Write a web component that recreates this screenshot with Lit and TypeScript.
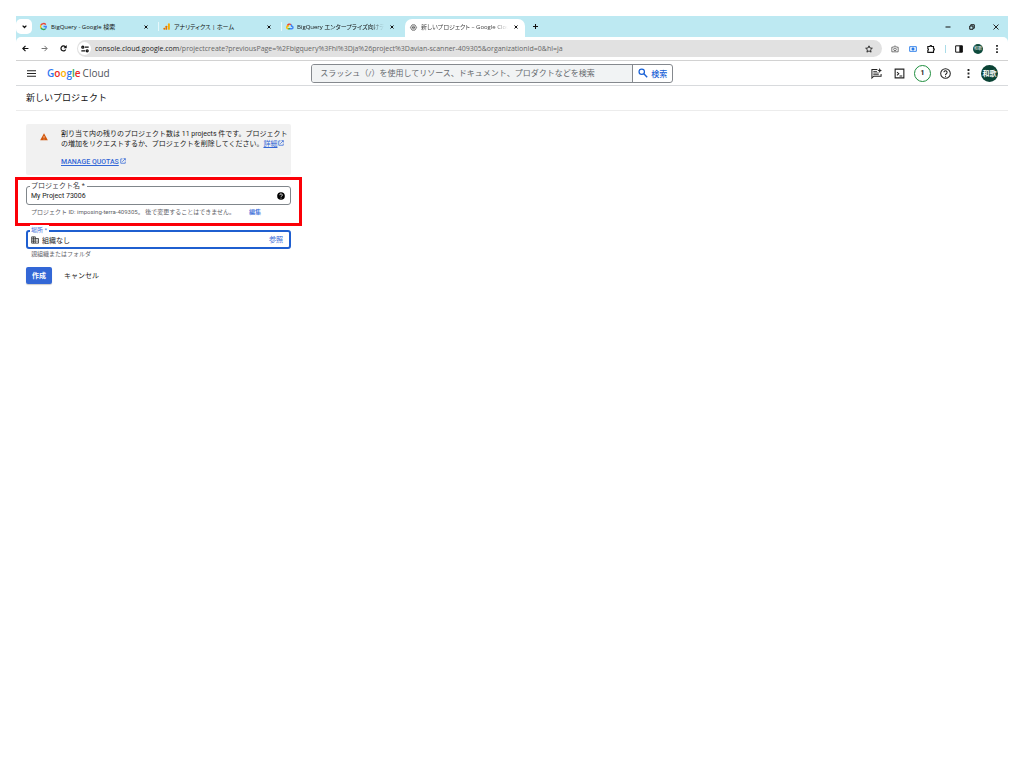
import { LitElement, html, css, svg } from "lit";
import { customElement, property } from "lit/decorators.js";

const gBlue = "#4285f4", gRed = "#ea4335", gYellow = "#fbbc04", gGreen = "#34a853";

const icons: Record<string, unknown> = {
  down: svg`<path d="M3 8l9 9 9-9" fill="none" stroke="currentColor" stroke-width="6"/>`,
  close: svg`<path d="M3 3l18 18M21 3L3 21" fill="none" stroke="currentColor" stroke-width="6"/>`,
  thinClose: svg`<path d="M2 2l20 20M22 2L2 22" fill="none" stroke="currentColor" stroke-width="3.600"/>`,
  plus: svg`<path d="M12 0v24M0 12h24" fill="none" stroke="currentColor" stroke-width="5"/>`,
  minimize: svg`<path d="M2 12h20" fill="none" stroke="currentColor" stroke-width="4"/>`,
  restore: svg`<path d="M3 8h13v13H3zM7 7V3h14v14h-4" fill="none" stroke="currentColor" stroke-width="4"/>`,
  back: svg`<path d="M22 12H4M12 3l-9 9 9 9" fill="none" stroke="currentColor" stroke-width="4"/>`,
  forward: svg`<path d="M2 12h18M12 3l9 9-9 9" fill="none" stroke="currentColor" stroke-width="2.800"/>`,
  reload: svg`<path d="M19.500 15.500A8.500 8.500 0 1 1 18 6l2 2.500" fill="none" stroke="currentColor" stroke-width="4.200"/><path d="M23 0v11H12z" fill="currentColor"/>`,
  tune: svg`<path d="M12 6.500h11M1 17.500h11" stroke="currentColor" stroke-width="4"/><circle cx="5.500" cy="6.500" r="3" fill="none" stroke="currentColor" stroke-width="4"/><circle cx="18.500" cy="17.500" r="3" fill="none" stroke="currentColor" stroke-width="4"/>`,
  star: svg`<path d="M12 2.500l2.900 6.500 7.100.7-5.300 4.700 1.500 7L12 17.700 5.800 21.400l1.500-7L2 9.700 9.100 9z" fill="none" stroke="currentColor" stroke-width="2.500"/>`,
  camera: svg`<path d="M2.500 6.500h5l2-3h5l2 3h5v14h-19z" fill="none" stroke="currentColor" stroke-width="2.400"/><circle cx="12" cy="13" r="4" fill="none" stroke="currentColor" stroke-width="2.400"/>`,
  capture: svg`<path d="M2 5h20v14H2z" fill="none" stroke="currentColor" stroke-width="2.600"/><path d="M12 7.500v9M7.500 12h9" stroke="currentColor" stroke-width="4.500"/>`,
  puzzle: svg`<path d="M2.500 4.500H9a2.500 2.500 0 0 1 5 0h5.500V11a2.500 2.500 0 0 1 0 5v6h-17v-6a2.600 2.600 0 0 0 0-5z" fill="none" stroke="currentColor" stroke-width="3.400"/>`,
  panel: svg`<path d="M2 2.500h20v19H2z" fill="none" stroke="currentColor" stroke-width="3"/><path d="M13 2h9v20h-9z" fill="currentColor"/>`,
  dots: svg`<path d="M9.500 0h5v5h-5zM9.500 9.500h5v5h-5zM9.500 19h5v5h-5z" fill="currentColor"/>`,
  menu: svg`<path d="M0 4.500h24M0 12h24M0 19.500h24" stroke="currentColor" stroke-width="2.800"/>`,
  search: svg`<circle cx="9" cy="9" r="6.500" fill="none" stroke="currentColor" stroke-width="3"/><path d="M14 14l8 8" stroke="currentColor" stroke-width="3.400"/>`,
  chat: svg`<path d="M14 3.500H2V22l4-4h16v-5" fill="none" stroke="currentColor" stroke-width="2.200"/><path d="M5 7.500h8M5 11h12M5 14.500h12" stroke="currentColor" stroke-width="1.800"/><path d="M19 0l1.500 4 3.500 1.500L20.500 7 19 11l-1.500-4L14 5.500 17.500 4z" fill="currentColor"/>`,
  shell: svg`<path d="M2.500 2.500h19v19h-19z" fill="none" stroke="currentColor" stroke-width="2.400"/><path d="M6.500 9l4 3.500-4 3.500M12 17.500h6" fill="none" stroke="currentColor" stroke-width="2.200"/>`,
  help: svg`<circle cx="12" cy="12" r="10.500" fill="none" stroke="currentColor" stroke-width="2.200"/><path d="M8.500 9.500a3.500 3.500 0 1 1 5.300 3c-1.300.8-1.800 1.400-1.800 2.700" fill="none" stroke="currentColor" stroke-width="2.200"/><path d="M10.900 17h2.300v2.300h-2.300z" fill="currentColor"/>`,
  helpFilled: svg`<circle cx="12" cy="12" r="11.500" fill="#000"/><path d="M8.300 9.500a3.700 3.700 0 1 1 5.500 3c-1.300.8-1.800 1.400-1.800 2.700" fill="none" stroke="#fff" stroke-width="2.600"/><path d="M10.700 17h2.600v2.600h-2.600z" fill="#fff"/>`,
  warning: svg`<path d="M12 1l11.500 21H.5z" fill="#d2570c"/><path d="M12 9v6M12 17v2.500" stroke="#ffe6d5" stroke-width="2"/>`,
  external: svg`<path d="M10 3.500H3v17.500h18v-7" fill="none" stroke="currentColor" stroke-width="3"/><path d="M14 2.500h7.500V10M21 3L9 15" fill="none" stroke="currentColor" stroke-width="3"/>`,
  building: svg`<path d="M2 2.500h11v19H2zM13 7.500h9.500v14H13" fill="none" stroke="currentColor" stroke-width="2.200"/><path d="M2 7h11M2 12h11M2 17h11M7.500 2.500v19M16 12h4M16 17h4" stroke="currentColor" stroke-width="2"/>`,
  google: svg`<path d="M20 5.500A10.300 10.300 0 0 0 3 7.300" fill="none" stroke=${gRed} stroke-width="4.500"/><path d="M3.400 6.800a10 10 0 0 0 0 10.400" fill="none" stroke=${gYellow} stroke-width="4.500"/><path d="M3.200 16.800a10 10 0 0 0 15.500 3" fill="none" stroke=${gGreen} stroke-width="4.500"/><path d="M12 12h9.500c0 3-1 6-3 8" fill="none" stroke=${gBlue} stroke-width="4.500"/>`,
  analytics: svg`<circle cx="4.500" cy="20" r="3.500" fill="#e37400"/><rect x="8.500" y="9" width="6" height="14.500" rx="2.500" fill="#e37400"/><rect x="17" y="1" width="6.500" height="22.500" rx="3" fill="#f9ab00"/>`,
  cloud: svg`<path d="M5 10a7.500 7.500 0 0 1 12-4.500" fill="none" stroke=${gRed} stroke-width="5"/><path d="M16.500 5.500A7 7 0 0 1 19.500 11a4.500 4.500 0 0 1 0 9H13" fill="none" stroke=${gBlue} stroke-width="5"/><path d="M13.500 20H7" stroke=${gGreen} stroke-width="5"/><path d="M8 20a5 5 0 1 1 2.500-9" fill="none" stroke=${gYellow} stroke-width="5"/>`,
  hexagon: svg`<path d="M7 3h10l5.500 9L17 21H7L1.500 12z" fill="none" stroke="currentColor" stroke-width="2.500"/><circle cx="12" cy="12" r="4" fill="none" stroke="currentColor" stroke-width="2.500"/><path d="M6 12h12" stroke="currentColor" stroke-width="2"/>`,
};

@customElement("ui-icon")
export class UiIcon extends LitElement {
  @property() name = "";
  static styles = css`
    :host { display: inline-block; flex: none; width: 8px; height: 8px; }
    .glyph { display: block; width: 100%; height: 100%; overflow: visible; }
  `;
  render() {
    return html`<svg class="glyph" viewBox="0 0 24 24" aria-hidden="true">${icons[this.name]}</svg>`;
  }
}

const shared = css`
  :host, * { box-sizing: border-box; }
  button, input { font: inherit; color: inherit; background: none; border: 0; padding: 0; margin: 0; outline: 0; min-width: 0; }
  button { display: flex; align-items: center; justify-content: center; cursor: pointer; white-space: nowrap; flex: none; }
`;

@customElement("browser-chrome")
export class BrowserChrome extends LitElement {
  static styles = [shared, css`
    :host { display: block; background: #bde9f2; color: #111; font-family: "Open Sans", "Noto Sans CJK JP", sans-serif; font-size: 6px; line-height: 10px; }
    .strip { display: flex; align-items: center; height: 21px; }
    .list { width: 16px; height: 15px; border-radius: 5px; background: #fff; margin-right: 4px; }
    .list ui-icon { width: 5px; height: 5px; }
    .tab { display: flex; align-items: center; flex: 0 1 123px; min-width: 0; height: 21px; padding: 0 9px 0 4px; gap: 4px; }
    .tab ui-icon { width: 7px; height: 7px; }
    .name { flex: 1; min-width: 0; overflow: hidden; white-space: nowrap; font-feature-settings: "palt"; }
    .fade { mask-image: linear-gradient(to right, #000 85%, transparent); }
    .tab button { width: 8px; height: 8px; }
    .tab button ui-icon { width: 4px; height: 4px; }
    .new ui-icon { width: 5px; height: 5px; }
    .split::before { content: ""; width: 1px; height: 9px; margin: 0 0 0 -5px; background: #e6f8fb; }
    .active { flex-basis: 120px; background: #fff; border-radius: 7px 7px 0 0; height: 18px; align-self: flex-end; padding: 0 5px 2px 5px; color: #444; }
    .active button { color: #111; }
    .new { width: 20px; height: 16px; }
    .window { margin-left: auto; display: flex; gap: 18px; padding-right: 9px; }
    .window ui-icon { width: 6px; height: 6px; display: block; }
    .bar { display: flex; align-items: center; height: 24px; background: #fff; border-radius: 5px 5px 0 0; border-bottom: 1px solid #d2d2d2; padding: 0 7px 0 5px; }
    .nav { width: 9px; height: 12px; margin-right: 10px; }
    .nav ui-icon { width: 7px; height: 7px; }
    .dim { color: #555; }
    .address { display: flex; align-items: center; flex: 1; min-width: 0; height: 17px; border-radius: 9px; background: #e1e1e1; padding: 0 9px 0 1px; gap: 4px; margin-left: -1px; }
    .site { width: 13px; height: 13px; border-radius: 7px; background: #fff; }
    .url { flex: 1; font-size: 7px; color: #666; white-space: nowrap; overflow: hidden; }
    .host { color: #222; }
    .tools { display: flex; align-items: center; gap: 10px; margin-left: 9px; }
    .tools ui-icon { display: block; }
    .blue { color: #1a73e8; }
    .grey { color: #555; }
    .sep { width: 1px; height: 8px; background: #a9dce8; margin: 0 -1px 0 0; }
    .avatar { width: 10px; height: 10px; border-radius: 5px; background: #0d4a3c; color: #fff; font-size: 4px; line-height: 10px; text-align: center; }
  `];
  tab(icon: string, name: string, extra = "", fade = false) {
    return html`<div class="tab ${extra}"><ui-icon name=${icon}></ui-icon><span class="name ${fade ? "fade" : ""}">${name}</span><button aria-label="閉じる"><ui-icon name="close"></ui-icon></button></div>`;
  }
  render() {
    return html`
      <div class="strip">
        <button class="list" aria-label="タブを検索"><ui-icon name="down"></ui-icon></button>
        ${this.tab("google", "BigQuery - Google 検索")}
        ${this.tab("analytics", "アナリティクス | ホーム", "split")}
        ${this.tab("cloud", "BigQuery エンタープライズ向けデー", "split", true)}
        ${this.tab("hexagon", "新しいプロジェクト – Google Clou", "active", true)}
        <button class="new" aria-label="新しいタブ"><ui-icon name="plus"></ui-icon></button>
        <div class="window">
          <button aria-label="最小化"><ui-icon name="minimize"></ui-icon></button>
          <button aria-label="元に戻す"><ui-icon name="restore"></ui-icon></button>
          <button aria-label="ウィンドウを閉じる"><ui-icon name="thinClose"></ui-icon></button>
        </div>
      </div>
      <div class="bar">
        <button class="nav" aria-label="戻る"><ui-icon name="back"></ui-icon></button>
        <button class="nav dim" aria-label="進む"><ui-icon name="forward"></ui-icon></button>
        <button class="nav" aria-label="再読み込み"><ui-icon name="reload"></ui-icon></button>
        <div class="address">
          <button class="site" aria-label="サイト情報"><ui-icon name="tune"></ui-icon></button>
          <span class="url"><span class="host">console.cloud.google.com</span>/projectcreate?previousPage=%2Fbigquery%3Fhl%3Dja%26project%3Davian-scanner-409305&amp;organizationId=0&amp;hl=ja</span>
          <button aria-label="ブックマーク"><ui-icon name="star"></ui-icon></button>
        </div>
        <div class="tools">
          <ui-icon class="grey" name="camera"></ui-icon>
          <ui-icon class="blue" name="capture"></ui-icon>
          <ui-icon name="puzzle"></ui-icon>
          <span class="sep"></span>
          <ui-icon name="panel"></ui-icon>
          <span class="avatar">和歌</span>
          <ui-icon name="dots"></ui-icon>
        </div>
      </div>`;
  }
}

@customElement("cloud-header")
export class CloudHeader extends LitElement {
  static styles = [shared, css`
    :host { display: grid; grid-template-columns: 7fr 362px 8fr; align-items: center; height: 25px; padding: 0 10px 0 11px; border-bottom: 1px solid #d8dadd; color: #222; }
    .brand { display: flex; align-items: center; gap: 11px; }
    .brand ui-icon { width: 9px; height: 9px; display: block; }
    .logo { display: flex; gap: 2px; font-size: 10px; line-height: 14px; text-decoration: none; color: #50545a; font-family: "Open Sans", sans-serif; }
    .google { font-weight: 600; }
    .b { color: #2f78f0; } .r { color: #ea2a25; } .y { color: #fbb004; } .g { color: #34a853; }
    .search { display: flex; height: 19px; border: 1px solid #85898e; border-radius: 3px; overflow: hidden; }
    .search input { flex: 1; background: #f1f3f4; padding: 0 8px; font-size: 8px; }
    .search input::placeholder { color: #666a6e; opacity: 1; }
    .search button { width: 40px; border-left: 1px solid #85898e; color: #1a62d6; font-size: 8px; font-weight: 500; gap: 3px; }
    .search ui-icon { width: 10px; height: 10px; }
    .actions { display: flex; align-items: center; justify-content: flex-end; gap: 6px; }
    .actions button { width: 17px; height: 17px; }
    .actions ui-icon { display: block; width: 11px; height: 11px; }
    .actions .more { width: 9px; height: 9px; }
    .actions .count { border: 1px solid #1e8e3e; border-radius: 9px; font-size: 7px; font-weight: 700; }
    .actions .avatar { border-radius: 9px; background: #0b4335; color: #fff; font-size: 7px; font-weight: 700; margin-left: -2px; }
  `];
  render() {
    return html`
      <div class="brand">
        <button aria-label="ナビゲーション メニュー"><ui-icon name="menu"></ui-icon></button>
        <a class="logo" href="#"><span class="google"><span class="b">G</span><span class="r">o</span><span class="y">o</span><span class="b">g</span><span class="g">l</span><span class="r">e</span></span><span>Cloud</span></a>
      </div>
      <form class="search" role="search">
        <input type="search" aria-label="検索" placeholder="スラッシュ（/）を使用してリソース、ドキュメント、プロダクトなどを検索">
        <button type="button"><ui-icon name="search"></ui-icon>検索</button>
      </form>
      <div class="actions">
        <button aria-label="Gemini"><ui-icon name="chat"></ui-icon></button>
        <button aria-label="Cloud Shell"><ui-icon name="shell"></ui-icon></button>
        <button class="count" aria-label="通知">1</button>
        <button aria-label="ヘルプ"><ui-icon name="help"></ui-icon></button>
        <button aria-label="その他"><ui-icon class="more" name="dots"></ui-icon></button>
        <button class="avatar">和歌</button>
      </div>`;
  }
}

@customElement("project-form")
export class ProjectForm extends LitElement {
  static styles = [shared, css`
    :host { display: block; max-width: 285px; padding: 13px 10px; font-size: 7px; line-height: 10px; color: #222; }
    a { color: #3367d6; }
    .notice { display: flex; gap: 13px; background: #f1f1f1; border-radius: 2px; padding: 5px 0 8px 14px; }
    .notice > ui-icon { margin-top: 4px; }
    .notice p { margin: 0 0 8px; white-space: nowrap; }
    .notice ui-icon { width: 8px; height: 8px; }
    .notice p ui-icon, .notice a + ui-icon { width: 6px; height: 6px; color: #3367d6; margin-left: 1px; }
    .quota { font-weight: 500; }
    .marked, .group { position: relative; margin-top: 11px; }
    .marked::after { content: ""; position: absolute; inset: -9px -11px -9px -11px; border: 3px solid #fb0007; pointer-events: none; }
    .field { display: flex; align-items: center; position: relative; height: 19px; border: 1px solid #80868b; border-radius: 3px; padding: 0 5px 0 4px; gap: 3px; }
    .field label { position: absolute; top: -6px; left: 3px; padding: 0 2px 0 1px; background: #fff; color: #3c4043; line-height: 10px; }
    .field input { flex: 1; height: 12px; }
    .focus { border: 2px solid #1f5fd0; padding: 0 6px 0 3px; }
    .focus label { top: -7px; left: 2px; color: #3367d6; font-size: 6px; }
    .hint { margin: 2px 0 0; padding-left: 5px; color: #5f6368; white-space: nowrap; font-size: 6px; }
    .link { color: #3367d6; }
    .hint .link { display: inline-block; margin-left: 14px; font-weight: 500; }
    .group { margin-top: 13px; }
    .group .hint { margin-top: 0; }
    .actions { display: flex; gap: 12px; margin-top: 8px; }
    .create { width: 26px; height: 17px; border-radius: 2px; background: #3367d6; color: #fff; font-weight: 700; box-shadow: 0 1px 1px #0003; }
  `];
  render() {
    return html`
      <section class="notice">
        <ui-icon name="warning"></ui-icon>
        <div>
          <p>割り当て内の残りのプロジェクト数は 11 projects 件です。プロジェクト<br>の増加をリクエストするか、プロジェクトを削除してください。<a href="#">詳細</a><ui-icon name="external"></ui-icon></p>
          <a class="quota" href="#">MANAGE QUOTAS</a><ui-icon name="external"></ui-icon>
        </div>
      </section>
      <div class="marked">
        <div class="field">
          <label for="name">プロジェクト名 *</label>
          <input id="name" value="My Project 73006">
          <ui-icon name="helpFilled"></ui-icon>
        </div>
        <p class="hint">プロジェクト ID: imposing-terra-409305。 後で変更することはできません。<button class="link">編集</button></p>
      </div>
      <div class="group">
        <div class="field focus">
          <label for="place">場所 *</label>
          <ui-icon name="building"></ui-icon>
          <input id="place" value="組織なし">
          <button class="link">参照</button>
        </div>
        <p class="hint">親組織またはフォルダ</p>
      </div>
      <div class="actions">
        <button class="create">作成</button>
        <button>キャンセル</button>
      </div>`;
  }
}

@customElement("app-root")
export class AppRoot extends LitElement {
  static styles = css`
    :host { display: block; box-sizing: border-box; min-height: 100vh; padding: 16px; background: #fff; font-family: Roboto, "Noto Sans CJK JP", sans-serif; }
    .title { margin: 0; padding: 5px 10px; font-size: 9px; line-height: 14px; font-weight: 400; color: #111; border-bottom: 1px solid #ececec; }
  `;
  render() {
    return html`
      <browser-chrome></browser-chrome>
      <cloud-header></cloud-header>
      <main>
        <h1 class="title">新しいプロジェクト</h1>
        <project-form></project-form>
      </main>`;
  }
}
